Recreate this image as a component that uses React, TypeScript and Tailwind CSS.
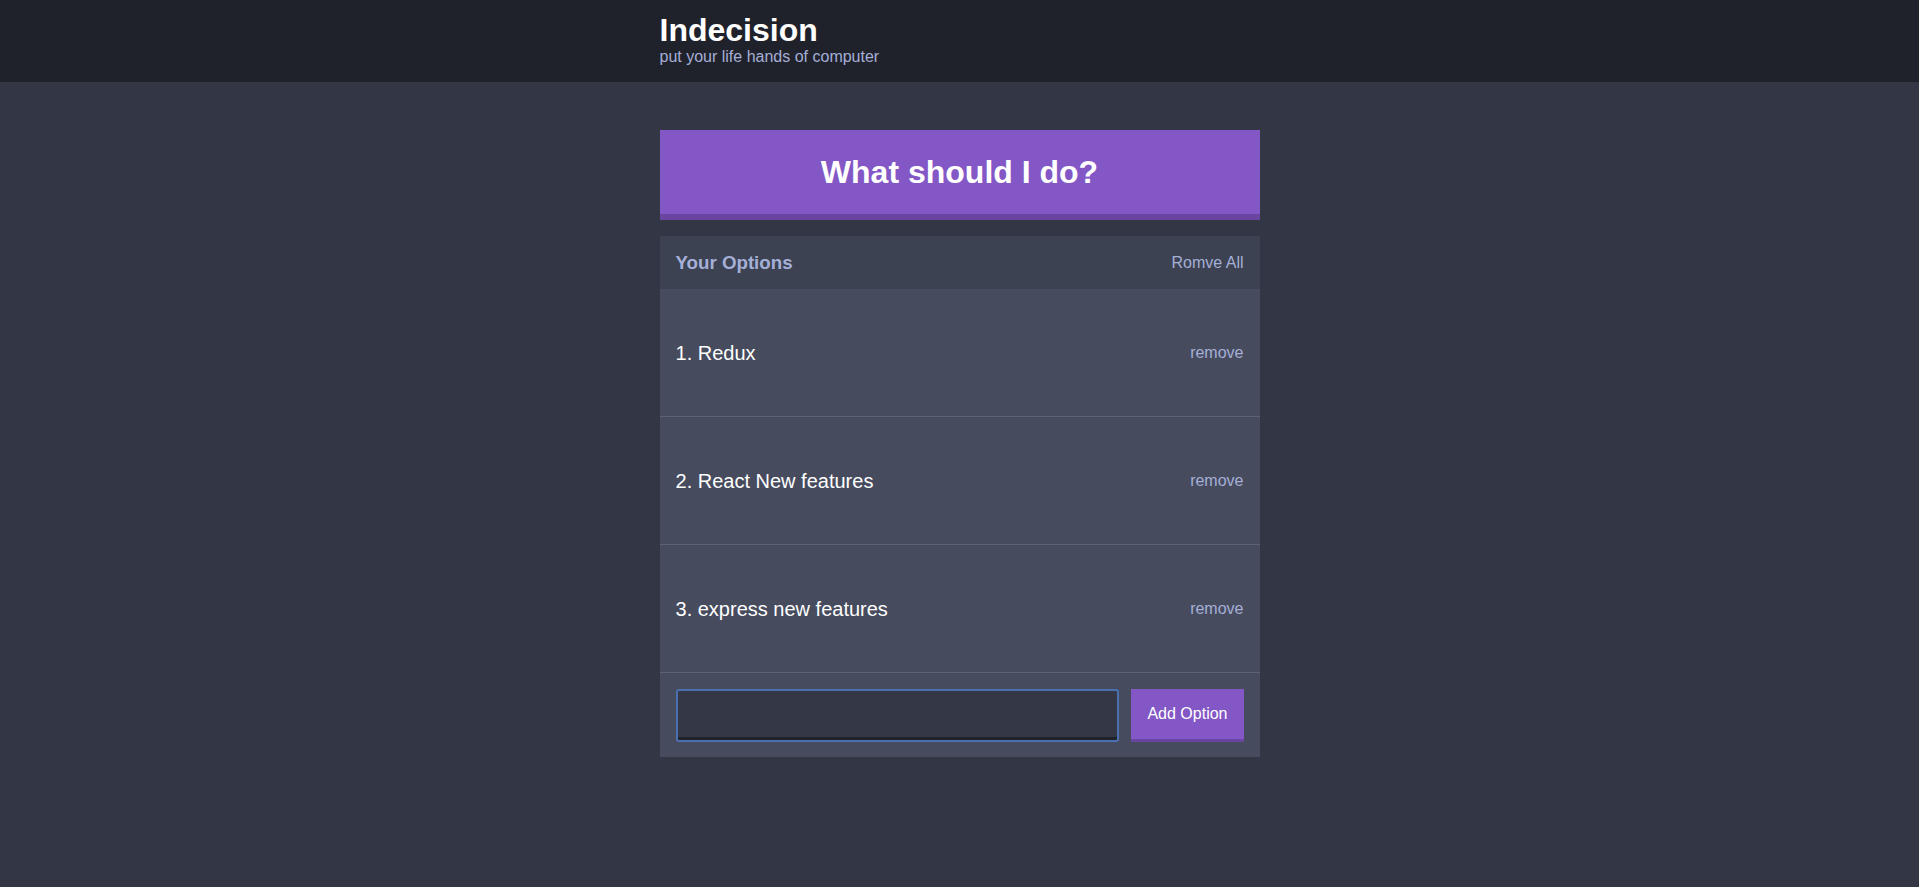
import React from "react";

const options = ["Redux", "React New features", "express new features"];

export default function App() {
  return (
    <div className="min-h-screen bg-[#333745] font-['Liberation_Sans',Arial,sans-serif] text-white">
      <header className="bg-[#20222b] pt-[12px] pb-4">
        <div className="mx-auto w-[600px]">
          <h1 className="m-0 text-[32px] font-bold leading-[36px] text-white">Indecision</h1>
          <h2 className="m-0 text-[16px] font-normal leading-[18px] text-[#a5afd7]">
            put your life hands of computer
          </h2>
        </div>
      </header>
      <main className="mx-auto mt-[48px] w-[600px]">
        <button className="mb-4 block w-full border-b-[6px] border-[#6a44a1] bg-[#8357c5] py-6 text-[32px] font-bold leading-[36px] text-white">
          What should I do?
        </button>
        <div className="bg-[#464b5e]">
          <div className="flex items-center justify-between bg-[#3c4251] p-4">
            <h3 className="m-0 text-[18.72px] font-bold leading-[21px] text-[#a5afd7]">Your Options</h3>
            <button className="text-[16px] leading-[18px] text-[#a5afd7]">Romve All</button>
          </div>
          {options.map((o, i) => (
            <div
              key={o}
              className="flex h-[128px] items-center justify-between border-b border-[#5c6279] px-4 pt-px"
            >
              <p className="m-0 text-[20px] leading-[23px] text-white">
                {i + 1}. {o}
              </p>
              <button className="text-[16px] leading-[18px] text-[#a5afd7]">remove</button>
            </div>
          ))}
          <form className="flex gap-3 px-4 pt-4 pb-[15px]" onSubmit={(e) => e.preventDefault()}>
            <input
              autoFocus
              type="text"
              className="h-[53px] flex-1 rounded-[3px] border-2 border-[#4a70b0] bg-[#343846] px-[9px] text-[16px] text-[#a5afd7] caret-[#a5afd7] shadow-[inset_0_-3px_0_#20222b] outline-none"
            />
            <button className="h-[53px] border-b-[3px] border-[#6a44a1] bg-[#8357c5] px-4 text-[16px] leading-[18px] text-white">
              Add Option
            </button>
          </form>
        </div>
      </main>
    </div>
  );
}
